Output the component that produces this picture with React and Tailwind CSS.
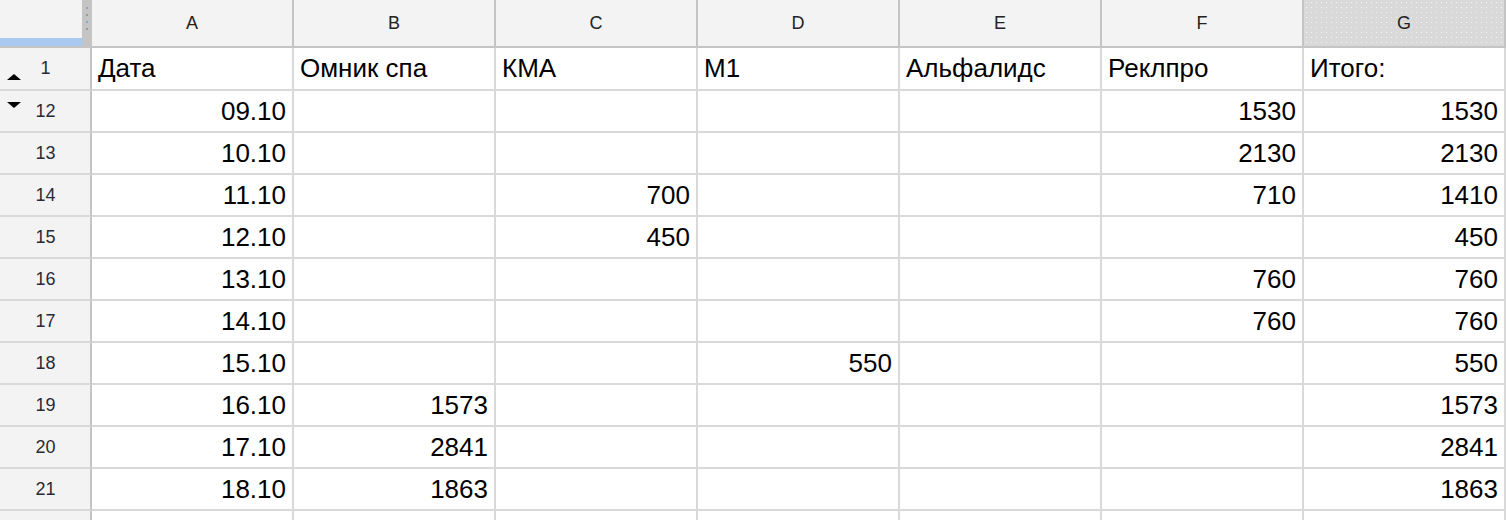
import React from "react";

const COLS = ["A", "B", "C", "D", "E", "F", "G"];

const HEAD = ["Дата", "Омник спа", "КМА", "М1", "Альфалидс", "Реклпро", "Итого:"];

const ROWS = [
  { n: 12, v: ["09.10", "", "", "", "", "1530", "1530"] },
  { n: 13, v: ["10.10", "", "", "", "", "2130", "2130"] },
  { n: 14, v: ["11.10", "", "700", "", "", "710", "1410"] },
  { n: 15, v: ["12.10", "", "450", "", "", "", "450"] },
  { n: 16, v: ["13.10", "", "", "", "", "760", "760"] },
  { n: 17, v: ["14.10", "", "", "", "", "760", "760"] },
  { n: 18, v: ["15.10", "", "", "550", "", "", "550"] },
  { n: 19, v: ["16.10", "1573", "", "", "", "", "1573"] },
  { n: 20, v: ["17.10", "2841", "", "", "", "", "2841"] },
  { n: 21, v: ["18.10", "1863", "", "", "", "", "1863"] },
];

const font = "font-['Liberation_Sans','Arial',sans-serif]";

const RowNum = ({ n, tri, h }) => (
  <div className={`relative ${h} w-[92px] shrink-0 bg-[#f3f3f3] border-r-[2px] border-r-[#c4c4c4] border-b-[2px] border-b-[#d9d9d9] flex items-center justify-center text-[18px] text-[#2a2a35]`}>
    {tri === "up" && (
      <svg className="absolute left-[7px] top-[26px]" width="14" height="6" viewBox="0 0 14 6">
        <polygon points="0,6 7,0 14,6" fill="#000" />
      </svg>
    )}
    {tri === "down" && (
      <svg className="absolute left-[7px] top-[11px]" width="14" height="6" viewBox="0 0 14 6">
        <polygon points="0,0 14,0 7,6" fill="#000" />
      </svg>
    )}
    <span className="pl-[1px]">{n}</span>
  </div>
);

const Cell = ({ children, left, h }) => (
  <div
    className={`${h} w-[202px] shrink-0 border-r-[2px] border-b-[2px] border-[#d9d9d9] flex items-center px-[6px] text-[26px] text-black ${left ? "justify-start" : "justify-end"}`}
  >
    {children}
  </div>
);

export default function App() {
  return (
    <div className={`w-[1506px] h-[520px] overflow-hidden bg-white ${font}`}>
      {/* column header */}
      <div className="flex h-[48px]">
        <div className="relative w-[92px] shrink-0 bg-[#f3f3f3] border-b-[2px] border-b-[#c4c4c4] flex">
          <div className="flex-1 flex flex-col">
            <div className="flex-1" />
            <div className="h-[8px] bg-[#a9c9f1]" />
          </div>
          <div className="w-[10px] bg-[#c4c4c4] flex flex-col items-center pt-[7px] gap-[5px]">
            <div className="w-[2px] h-[2px] bg-[#7fa8d8]" />
            <div className="w-[2px] h-[2px] bg-[#9a9a9a]" />
            <div className="w-[2px] h-[2px] bg-[#7fa8d8]" />
            <div className="w-[2px] h-[2px] bg-[#9a9a9a]" />
          </div>
        </div>
        {COLS.map((c) => (
          <div
            key={c}
            className={`w-[202px] shrink-0 border-r-[2px] border-r-[#c4c4c4] border-b-[2px] border-b-[#c4c4c4] flex items-center justify-center text-[18px] text-[#222] ${
              c === "G"
                ? "bg-[#d9d9d9] bg-[radial-gradient(#f4f4f4_0.8px,transparent_1px)] bg-[length:5px_5px]"
                : "bg-[#f3f3f3]"
            }`}
          >
            {c}
          </div>
        ))}
      </div>

      {/* row 1 */}
      <div className="flex">
        <RowNum n={1} tri="up" h="h-[43px]" />
        {HEAD.map((t, i) => (
          <Cell key={i} left h="h-[43px]">
            {t}
          </Cell>
        ))}
      </div>

      {ROWS.map((r, ri) => (
        <div key={r.n} className="flex">
          <RowNum n={r.n} tri={ri === 0 ? "down" : null} h="h-[42px]" />
          {r.v.map((v, i) => (
            <Cell key={i} h="h-[42px]">
              {v}
            </Cell>
          ))}
        </div>
      ))}

      <div className="flex">
        <RowNum n="" h="h-[42px]" />
        {COLS.map((c) => (
          <Cell key={c} h="h-[42px]" />
        ))}
      </div>
    </div>
  );
}
